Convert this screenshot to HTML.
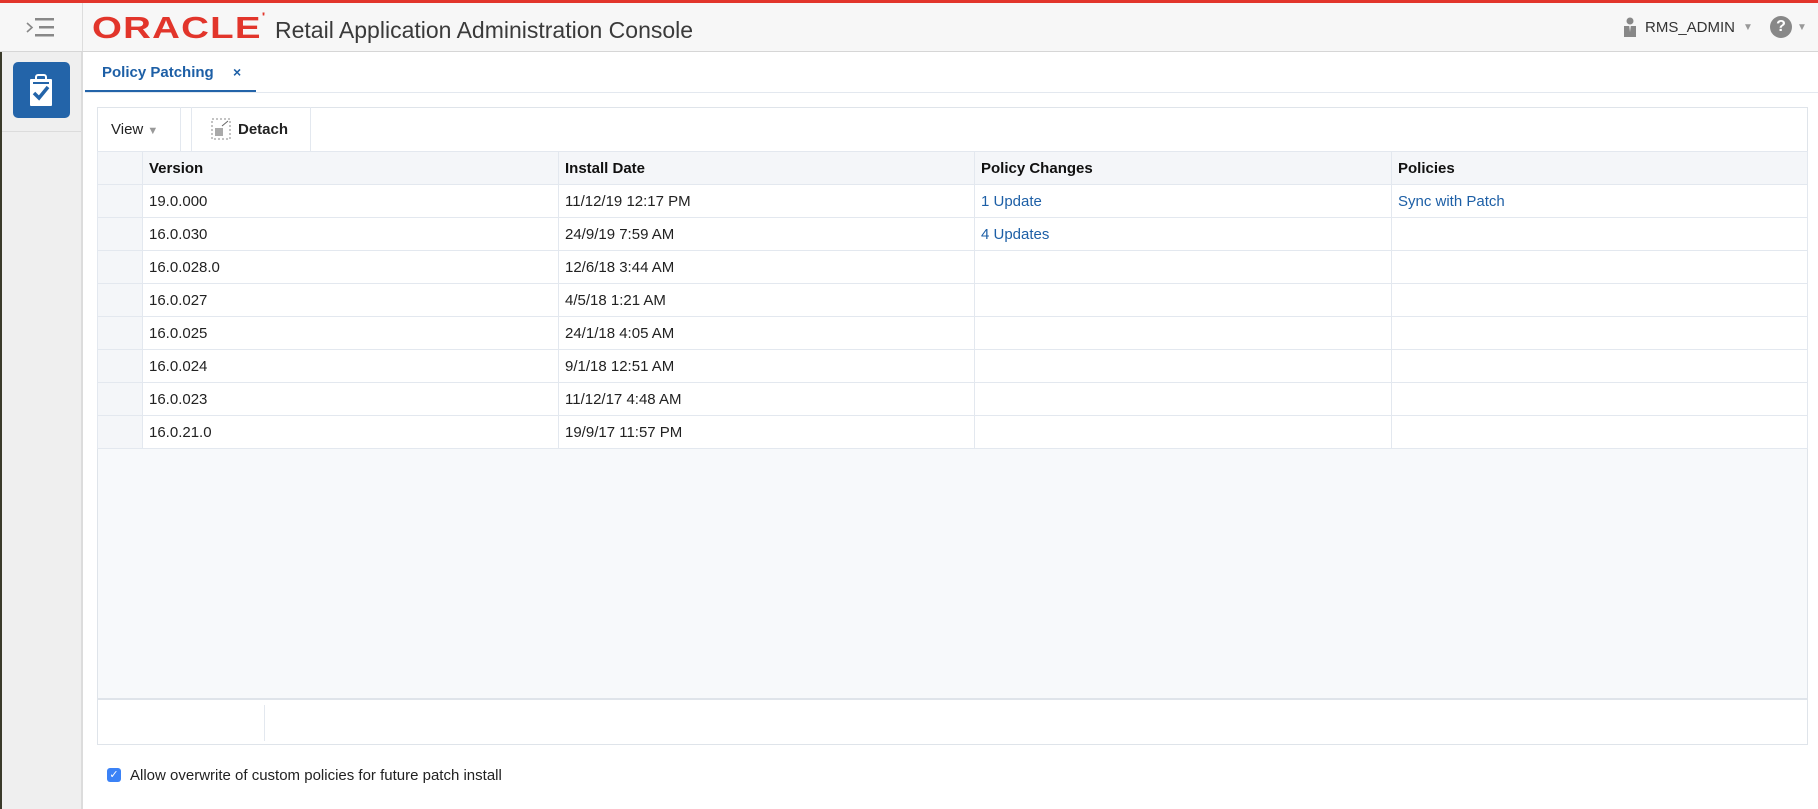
<!DOCTYPE html>
<html><head><meta charset="utf-8"><style>
*{box-sizing:border-box;margin:0;padding:0}
body{width:1818px;height:809px;overflow:hidden;background:#fff;font-family:"Liberation Sans",Arial,sans-serif;color:#222;position:relative}
.abs{position:absolute}
.hdr{left:0;top:0;width:1818px;height:52px;background:#f7f7f7;border-top:3px solid #e2352b;border-bottom:1px solid #d6d6d6}
.side{left:0;top:52px;width:83px;height:757px;background:#efefef;border-right:2px solid #dcdcdc}
table{border-collapse:collapse;position:absolute;left:97px;top:151px;width:1711px;font-size:15px}
td,th{border:1px solid #e3e8ef;height:33px;padding:0 6px;text-align:left;white-space:nowrap}
th{height:33px;background:#f4f6f9;font-weight:bold;color:#111}
td.rh{background:#f4f6f9}
a{color:#1d5fa6;text-decoration:none}
</style></head><body>
<div class="abs hdr">
  <svg class="abs" style="left:26px;top:14px" width="30" height="22" viewBox="0 0 30 22"><g fill="#888"><rect x="9" y="1" width="19" height="2.5"/><rect x="13" y="9" width="15" height="2.5"/><rect x="9" y="17" width="19" height="2.5"/></g><path d="M1 6 L6 10.5 L1 15" stroke="#888" stroke-width="1.6" fill="none"/></svg>
  <div class="abs" style="left:82px;top:0;width:1px;height:48px;background:#ddd"></div>
  <div class="abs" style="left:92px;top:7px;font-size:31px;font-weight:bold;color:#e2352b;letter-spacing:1px;transform:scaleX(1.24);transform-origin:left">ORACLE<span style="font-size:12px;vertical-align:top">'</span></div>
  <div class="abs" style="left:275px;top:14px;font-size:23px;color:#3a3a3a">Retail Application Administration Console</div>
  <svg class="abs" style="left:1623px;top:14px" width="14" height="20"><circle cx="7" cy="4" r="3.5" fill="#888"/><rect x="1" y="9" width="12" height="11" fill="#888"/><path d="M6 9 L8 9 L7 15z" fill="#ddd"/></svg>
  <div class="abs" style="left:1645px;top:16px;font-size:15px;color:#333">RMS_ADMIN</div>
  <div class="abs" style="left:1743px;top:19px;font-size:10px;color:#999">▼</div>
  <div class="abs" style="left:1770px;top:13px;width:22px;height:22px;border-radius:50%;background:#888;color:#fff;font-weight:bold;font-size:16px;text-align:center;line-height:22px">?</div>
  <div class="abs" style="left:1797px;top:19px;font-size:10px;color:#999">▼</div>
</div>
<div class="abs" style="left:0;top:52px;width:2px;height:757px;background:#3a3a2a"></div>
<div class="abs side" style="left:2px;width:81px">
  <div class="abs" style="left:11px;top:10px;width:57px;height:56px;background:#2364a9;border-radius:5px">
    <svg class="abs" style="left:16px;top:12px" width="24" height="32" viewBox="0 0 24 32"><rect x="1" y="5" width="22" height="27" rx="1" fill="#fff"/><rect x="7" y="1" width="10" height="6" rx="2" fill="none" stroke="#fff" stroke-width="2"/><rect x="4" y="8" width="16" height="2" fill="#2364a9"/><path d="M5 19 L10 24 L19 13" stroke="#2364a9" stroke-width="3.5" fill="none"/></svg>
  </div>
  <div class="abs" style="left:0;top:79px;width:79px;height:1px;background:#dcdcdc"></div>
</div>
<div class="abs" style="left:102px;top:64px;font-size:15px;font-weight:bold;color:#1d5fa6">Policy Patching</div>
<div class="abs" style="left:233px;top:64px;font-size:14px;font-weight:bold;color:#1d5fa6">×</div>
<div class="abs" style="left:85px;top:90px;width:171px;height:3px;background:#2364a9"></div>
<div class="abs" style="left:85px;top:92px;width:1733px;height:1px;background:#e3e8ef"></div>
<div class="abs" style="left:97px;top:107px;width:1711px;height:638px;border:1px solid #dfe4ea"></div>
<div class="abs" style="left:111px;top:121px;font-size:15px">View <span style="color:#999;font-size:11px">▼</span></div>
<div class="abs" style="left:180px;top:107px;width:1px;height:44px;background:#e3e8ef"></div>
<div class="abs" style="left:191px;top:107px;width:1px;height:44px;background:#e3e8ef"></div>
<div class="abs" style="left:310px;top:107px;width:1px;height:44px;background:#e3e8ef"></div>
<svg class="abs" style="left:211px;top:118px" width="20" height="22"><rect x="1" y="1" width="18" height="20" fill="none" stroke="#888" stroke-dasharray="2 2"/><rect x="4" y="10" width="8" height="8" fill="#aaa"/><path d="M11 8 L17 3" stroke="#666"/></svg>
<div class="abs" style="left:238px;top:121px;font-size:15px;font-weight:bold">Detach</div>
<div class="abs" style="left:98px;top:449px;width:1709px;height:251px;background:#f7f9fb;border-bottom:2px solid #dfe4ea"></div>
<div class="abs" style="left:264px;top:705px;width:1px;height:36px;background:#e3e8ef"></div>
<table>
<tr><th style="width:45px"></th><th style="width:416px">Version</th><th style="width:416px">Install Date</th><th style="width:417px">Policy Changes</th><th>Policies</th></tr>
<tr><td class="rh"></td><td>19.0.000</td><td>11/12/19 12:17 PM</td><td><a>1 Update</a></td><td><a>Sync with Patch</a></td></tr>
<tr><td class="rh"></td><td>16.0.030</td><td>24/9/19 7:59 AM</td><td><a>4 Updates</a></td><td></td></tr>
<tr><td class="rh"></td><td>16.0.028.0</td><td>12/6/18 3:44 AM</td><td></td><td></td></tr>
<tr><td class="rh"></td><td>16.0.027</td><td>4/5/18 1:21 AM</td><td></td><td></td></tr>
<tr><td class="rh"></td><td>16.0.025</td><td>24/1/18 4:05 AM</td><td></td><td></td></tr>
<tr><td class="rh"></td><td>16.0.024</td><td>9/1/18 12:51 AM</td><td></td><td></td></tr>
<tr><td class="rh"></td><td>16.0.023</td><td>11/12/17 4:48 AM</td><td></td><td></td></tr>
<tr><td class="rh"></td><td>16.0.21.0</td><td>19/9/17 11:57 PM</td><td></td><td></td></tr>
</table>
<div class="abs" style="left:107px;top:768px;width:14px;height:14px;background:#3b82f6;border-radius:3px;color:#fff;font-size:11px;text-align:center;line-height:14px">✓</div>
<div class="abs" style="left:130px;top:767px;font-size:15px;color:#222">Allow overwrite of custom policies for future patch install</div>
</body></html>
